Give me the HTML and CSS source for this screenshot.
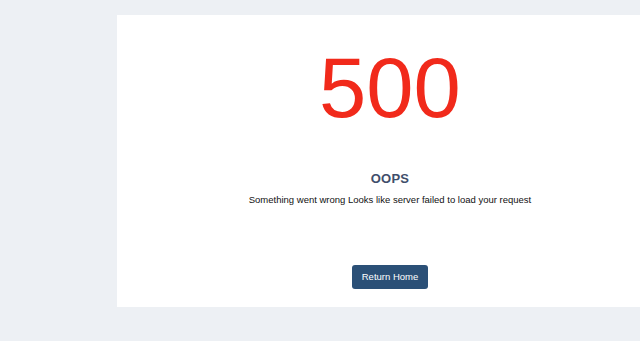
FILE: index.html
```html
<!DOCTYPE html>
<html lang="en">
<head>
  <meta charset="UTF-8">
  <meta name="viewport" content="width=device-width, initial-scale=1.0">
  <link rel="stylesheet" href="styles.css">
  <title>500 - Server Error</title>
</head>
<body>
  <div class="page">
    <div class="card">
      <h1 class="code">500</h1>
      <h3 class="title">OOPS</h3>
      <p class="message">Something went wrong Looks like server failed to load your request</p>
      <a href="#" class="home-btn">Return Home</a>
    </div>
  </div>
</body>
</html>
```

FILE: styles.css
```css
*{
  margin: 0;
  padding: 0;
  box-sizing: border-box;
}
body{
  width: 640px;
  height: 341px;
  background: #edf0f4;
  font-family: "Liberation Sans", Arial, sans-serif;
  overflow: hidden;
}
.page{
  padding: 15px 0 0 117px;
}
.card{
  width: 546px;
  height: 292px;
  background: #fff;
  display: flex;
  flex-direction: column;
  align-items: center;
  text-align: center;
}
.code{
  font-size: 85px;
  font-weight: normal;
  color: #f12a1b;
  line-height: 1;
  margin-top: 30px;
}
.title{
  font-size: 13px;
  font-weight: bold;
  color: #3f4e6b;
  margin-top: 41px;
  letter-spacing: 0.2px;
}
.message{
  font-size: 9.5px;
  color: #111;
  margin-top: 8px;
}
.home-btn{
  display: inline-block;
  margin-top: 60px;
  background: #2b5077;
  color: #fff;
  font-size: 9.5px;
  text-decoration: none;
  padding: 5px 10px;
  border-radius: 3px;
  line-height: 14px;
}
```
